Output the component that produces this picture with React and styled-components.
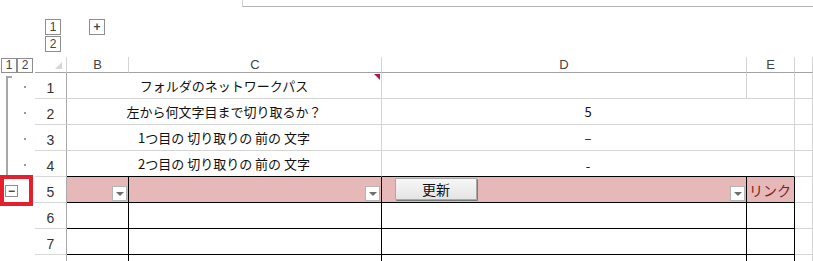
import React from "react";
import styled, { createGlobalStyle } from "styled-components";

const GlobalStyle = createGlobalStyle`
  body {
    margin: 0;
    background: #fff;
    font-family: "Noto Sans CJK JP", "Liberation Sans", sans-serif;
  }
`;

const Page = styled.div`
  width: 813px;
  height: 261px;
  overflow: hidden;
  background: #fff;
`;

const FormulaEdge = styled.div`
  height: 6px;
  margin-left: 242px;
  border-left: 1px solid #d0d0d0;
  border-bottom: 1px solid #b4b4b4;
`;

const ColOutline = styled.div`
  height: 50px;
  box-sizing: border-box;
  padding: 12px 0 0 45px;
  display: flex;
  gap: 28px;
  align-items: flex-start;
`;

const BtnStack = styled.div`
  display: flex;
  flex-direction: column;
  gap: 1px;
`;

const OutlineBtn = styled.div`
  width: ${(p) => p.$w || 16}px;
  height: ${(p) => p.$h || 16}px;
  box-sizing: border-box;
  border: 1px solid #8e8e8e;
  background: #fff;
  display: flex;
  align-items: center;
  justify-content: center;
  font-family: "Liberation Sans", sans-serif;
  font-size: 12px;
  font-weight: ${(p) => (p.$bold ? 700 : 400)};
  color: #444;
  line-height: 1;
`;

const Sheet = styled.div`
  display: grid;
  grid-template-columns: 35px 32px 62px 253px 365px 48px 1fr;
  grid-template-rows: 16px repeat(8, 26px);
`;

const GutterHead = styled.div`
  display: flex;
  align-items: center;
  padding-left: 1px;
`;

const Gutter = styled.div`
  display: flex;
  align-items: center;
`;

const Bracket = styled.div`
  align-self: stretch;
  width: 4px;
  margin-left: 6px;
  border-left: 2px solid #a8a8a8;
  border-top: ${(p) => (p.$first ? "2px solid #a8a8a8" : "none")};
  margin-top: ${(p) => (p.$first ? "3px" : "0")};
`;

const Dot = styled.span`
  width: 2px;
  height: 2px;
  margin-left: 12px;
  margin-top: 2px;
  background: #9a9a9a;
`;

const RedFrame = styled.div`
  margin: -2px 2px -3px 0;
  flex: 1;
  align-self: stretch;
  border: 4px solid #e3202b;
  background: #fff;
  display: flex;
  align-items: center;
  padding-left: 1px;
`;

const Corner = styled.div`
  grid-column: 2;
  border-right: 1px solid #d4d4d4;
  border-bottom: 1px solid #a2a2a2;
  display: flex;
  align-items: flex-end;
  justify-content: flex-end;
  padding: 0 4px 3px 0;
`;

const CornerMark = styled.span`
  width: 0;
  height: 0;
  border-left: 7px solid transparent;
  border-bottom: 7px solid #d6d6d6;
`;

const ColHead = styled.div`
  border-right: 1px solid #d4d4d4;
  border-bottom: 1px solid #a2a2a2;
  display: flex;
  align-items: center;
  justify-content: center;
  font-family: "Liberation Sans", sans-serif;
  font-size: 13px;
  color: #444;
`;

const RowHead = styled.div`
  grid-column: 2;
  border-right: 1px solid #a8a8a8;
  border-bottom: 1px solid #d8d8d8;
  display: flex;
  align-items: flex-end;
  justify-content: center;
  padding-bottom: 2px;
  font-family: "Liberation Sans", sans-serif;
  font-size: 14px;
  color: #333;
`;

const Cell = styled.div`
  position: relative;
  grid-column: ${(p) => p.$col};
  display: flex;
  align-items: ${(p) => p.$valign || "center"};
  justify-content: ${(p) => p.$justify || "center"};
  box-sizing: border-box;
  padding: ${(p) => p.$pad || "0 2px"};
  border-right: 1px solid ${(p) => (p.$dark ? "#000" : "#d4d4d4")};
  border-bottom: 1px solid ${(p) => (p.$darkBottom ? "#000" : "#d4d4d4")};
  background: ${(p) => (p.$pink ? "#e6b8b7" : "#fff")};
  font-size: 13px;
  color: #111;
  white-space: nowrap;
`;

const CommentMark = styled.span`
  position: absolute;
  top: 1px;
  right: 1px;
  width: 0;
  height: 0;
  border-left: 6px solid transparent;
  border-top: 6px solid #b0184a;
`;

const DropBtn = styled.div`
  width: 15px;
  height: 15px;
  box-sizing: border-box;
  margin-bottom: 1px;
  border: 1px solid #b5b5b5;
  background: #fff;
  display: flex;
  align-items: center;
  justify-content: center;
  flex-shrink: 0;
  &::after {
    content: "";
    border-left: 4px solid transparent;
    border-right: 4px solid transparent;
    border-top: 4px solid #6e6e6e;
  }
`;

const UpdateButton = styled.button`
  align-self: flex-start;
  margin-top: 1px;
  width: 82px;
  height: 22px;
  padding: 0;
  border: 1px solid #a9a9a9;
  border-radius: 1px;
  background: linear-gradient(#f7f7f7, #e4e4e4);
  box-shadow: 1px 1px 0 #7a7a7a;
  font-family: "Noto Sans CJK JP", sans-serif;
  font-size: 14px;
  color: #111;
  line-height: 1;
`;

const LinkText = styled.span`
  font-size: 14px;
  color: #7e1f22;
`;

const rows = [
  { n: 1, c: "フォルダのネットワークパス", comment: true, splitDE: true },
  { n: 2, c: "左から何文字目まで切り取るか？", d: "5" },
  { n: 3, c: "1つ目の 切り取りの 前の 文字", d: "–" },
  { n: 4, c: "2つ目の 切り取りの 前の 文字", d: "-", low: true },
];

function App() {
  return (
    <Page>
      <GlobalStyle />
      <FormulaEdge />
      <ColOutline>
        <BtnStack>
          <OutlineBtn>1</OutlineBtn>
          <OutlineBtn>2</OutlineBtn>
        </BtnStack>
        <OutlineBtn $bold>+</OutlineBtn>
      </ColOutline>

      <Sheet>
        <GutterHead>
          <OutlineBtn $h={15}>1</OutlineBtn>
          <OutlineBtn $h={15}>2</OutlineBtn>
        </GutterHead>
        <Corner>
          <CornerMark />
        </Corner>
        {["B", "C", "D", "E", ""].map((h, i) => (
          <ColHead key={i}>{h}</ColHead>
        ))}

        {rows.map((r) => (
          <React.Fragment key={r.n}>
            <Gutter>
              <Bracket $first={r.n === 1} />
              <Dot />
            </Gutter>
            <RowHead>{r.n}</RowHead>
            <Cell $col="3 / span 2" $darkBottom={r.n === 4}>
              {r.c}
              {r.comment && <CommentMark />}
            </Cell>
            {r.splitDE ? (
              <>
                <Cell $col={5} />
                <Cell $col={6} />
              </>
            ) : (
              <Cell
                $col="5 / span 2"
                $darkBottom={r.n === 4}
                $valign={r.low ? "flex-end" : "center"}
                $pad={r.low ? "0 2px 1px" : "0 2px"}
              >
                {r.d}
              </Cell>
            )}
            <Cell $col={7} />
          </React.Fragment>
        ))}

        <Gutter>
          <RedFrame>
            <OutlineBtn $w={13} $h={12} $bold>
              −
            </OutlineBtn>
          </RedFrame>
        </Gutter>
        <RowHead>5</RowHead>
        <Cell $col={3} $pink $dark $darkBottom $justify="flex-end" $valign="flex-end" $pad="0 1px">
          <DropBtn />
        </Cell>
        <Cell $col={4} $pink $dark $darkBottom $justify="flex-end" $valign="flex-end" $pad="0 1px">
          <DropBtn />
        </Cell>
        <Cell
          $col={5}
          $pink
          $dark
          $darkBottom
          $justify="space-between"
          $valign="flex-end"
          $pad="0 1px 0 13px"
        >
          <UpdateButton>更新</UpdateButton>
          <DropBtn />
        </Cell>
        <Cell $col={6} $pink $dark $darkBottom $justify="flex-start" $pad="0 2px">
          <LinkText>リンク</LinkText>
        </Cell>
        <Cell $col={7} />

        {[6, 7, 8].map((n) => (
          <React.Fragment key={n}>
            <Gutter />
            <RowHead>{n < 8 ? n : ""}</RowHead>
            <Cell $col={3} $dark $darkBottom />
            <Cell $col={4} $dark $darkBottom />
            <Cell $col={5} $dark $darkBottom />
            <Cell $col={6} $dark $darkBottom />
            <Cell $col={7} />
          </React.Fragment>
        ))}
      </Sheet>
    </Page>
  );
}

export default App;
